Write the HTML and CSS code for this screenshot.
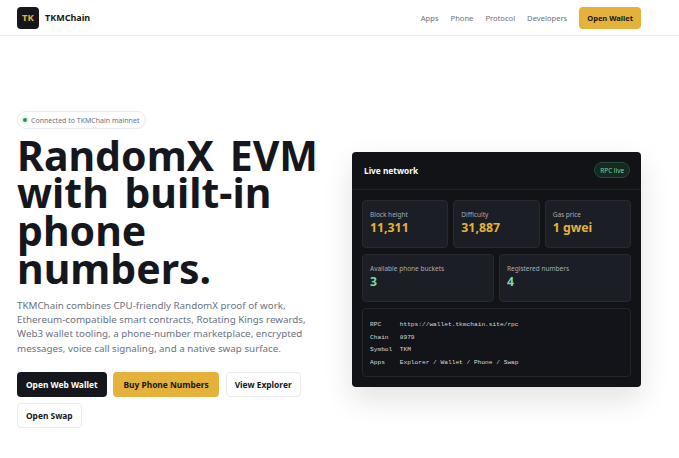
FILE: index.html
```html
<!DOCTYPE html>
<html lang="en">
<head>
    <meta charset="UTF-8">
    <meta name="viewport" content="width=device-width, initial-scale=1.0">
    <title>TKMChain</title>
    <link rel="stylesheet" href="styles.css">
</head>
<body>

<header class="topbar">
    <a class="brand" href="#">
        <span class="brand-mark">TK</span>
        <span class="brand-name">TKMChain</span>
    </a>
    <nav class="nav">
        <a href="#">Apps</a>
        <a href="#">Phone</a>
        <a href="#">Protocol</a>
        <a href="#">Developers</a>
        <a class="btn btn-gold btn-small" href="#">Open Wallet</a>
    </nav>
</header>

<main class="hero">
    <section class="intro">
        <div class="status-pill"><span class="status-dot"></span>Connected to TKMChain mainnet</div>
        <h1>RandomX EVM with built-in phone numbers.</h1>
        <p class="lead">TKMChain combines CPU-friendly RandomX proof of work, Ethereum-compatible smart contracts, Rotating Kings rewards, Web3 wallet tooling, a phone-number marketplace, encrypted messages, voice call signaling, and a native swap surface.</p>
        <div class="actions">
            <a class="btn btn-dark" href="#">Open Web Wallet</a>
            <a class="btn btn-gold" href="#">Buy Phone Numbers</a>
            <a class="btn btn-light" href="#">View Explorer</a>
            <a class="btn btn-light" href="#">Open Swap</a>
        </div>
    </section>

    <aside class="panel">
        <div class="panel-head">
            <h2>Live network</h2>
            <span class="live-pill">RPC live</span>
        </div>
        <div class="panel-body">
            <div class="stats stats-three">
                <div class="stat"><span class="stat-label">Block height</span><strong class="stat-value">11,311</strong></div>
                <div class="stat"><span class="stat-label">Difficulty</span><strong class="stat-value">31,887</strong></div>
                <div class="stat"><span class="stat-label">Gas price</span><strong class="stat-value">1 gwei</strong></div>
            </div>
            <div class="stats stats-two">
                <div class="stat"><span class="stat-label">Available phone buckets</span><strong class="stat-value green">3</strong></div>
                <div class="stat"><span class="stat-label">Registered numbers</span><strong class="stat-value green">4</strong></div>
            </div>
            <pre class="code">RPC     https://wallet.tkmchain.site/rpc
Chain   8979
Symbol  TKM
Apps    Explorer / Wallet / Phone / Swap</pre>
        </div>
    </aside>
</main>

</body>
</html>
```

FILE: styles.css
```css
* {
    box-sizing: border-box;
}
body {
    font-family: "Noto Sans", "Open Sans", sans-serif;
    margin: 0;
    background: #fff;
    color: #15171c;
}
a {
    text-decoration: none;
    color: inherit;
}
.topbar {
    height: 36px;
    padding: 0 38px 0 17px;
    display: flex;
    justify-content: space-between;
    align-items: center;
    border-bottom: 1px solid #e8eaed;
}
.brand {
    display: flex;
    align-items: center;
    gap: 6px;
}
.brand-mark {
    width: 22px;
    height: 22px;
    border-radius: 4px;
    background: #15171c;
    color: #e4b23a;
    font-size: 9.5px;
    font-weight: 700;
    display: flex;
    justify-content: center;
    align-items: center;
}
.brand-name {
    font-size: 9px;
    font-weight: 700;
}
.nav {
    display: flex;
    align-items: center;
    gap: 12px;
    font-size: 7.6px;
    color: #6b7280;
}
.btn {
    display: inline-flex;
    align-items: center;
    justify-content: center;
    height: 25px;
    padding: 0 8px;
    border-radius: 4px;
    font-size: 8.4px;
    font-weight: 700;
    color: #15171c;
    border: 1px solid transparent;
}
.btn-gold {
    background: #e4b23a;
    padding: 0 9.5px;
}
.btn-small {
    height: 22px;
    padding: 0 7px;
    font-size: 7.5px;
}
.btn-dark {
    background: #15171c;
    color: #fff;
}
.btn-light {
    background: #fff;
    border-color: #e8eaed;
}
.hero {
    padding: 75px 38px 0 17px;
    display: grid;
    grid-template-columns: 306px 289px;
    justify-content: space-between;
    align-items: center;
}
.status-pill {
    display: flex;
    width: fit-content;
    align-items: center;
    gap: 4px;
    height: 18px;
    padding: 0 6px 0 5px;
    border: 1px solid #e8eaed;
    border-radius: 9px;
    font-size: 7px;
    color: #6b7280;
}
.status-dot {
    width: 4px;
    height: 4px;
    border-radius: 50%;
    background: #2f8f5f;
    box-shadow: 0 0 0 2px #e3f3ea;
}
h1 {
    margin: 7.6px 0 0;
    font-size: 41px;
    line-height: 37.8px;
    font-weight: 700;
    word-spacing: 5px;
}
.lead {
    margin: 11px 0 0;
    max-width: 303px;
    font-size: 9.8px;
    line-height: 14.3px;
    color: #6b7280;
}
.actions {
    margin-top: 16px;
    display: flex;
    flex-wrap: wrap;
    gap: 6px 6.5px;
}
.panel {
    background: #111317;
    border-radius: 4px;
    box-shadow: 0 12px 30px rgba(0, 0, 0, 0.12);
    color: #fff;
}
.panel-head {
    height: 38px;
    padding: 0 11px 0 12px;
    display: flex;
    justify-content: space-between;
    align-items: center;
    border-bottom: 1px solid #1d2026;
}
.panel-head h2 {
    margin: 0;
    font-size: 8.3px;
    font-weight: 700;
}
.live-pill {
    height: 16px;
    padding: 0 5px;
    border-radius: 8px;
    border: 1px solid #254a3c;
    background: #14291f;
    color: #7fd6a8;
    font-size: 6.4px;
    display: flex;
    align-items: center;
}
.panel-body {
    padding: 10px;
    display: flex;
    flex-direction: column;
    gap: 6px;
}
.stats {
    display: grid;
    gap: 5px;
}
.stats-three {
    grid-template-columns: repeat(3, 1fr);
}
.stats-two {
    grid-template-columns: repeat(2, 1fr);
}
.stat {
    height: 48px;
    padding: 9px 7px;
    background: #1b1e24;
    border: 1px solid #272a31;
    border-radius: 4px;
    display: flex;
    flex-direction: column;
}
.stat-label {
    font-size: 6.5px;
    line-height: 10px;
    color: #a6abb5;
}
.stat-value {
    font-size: 12.3px;
    line-height: 16px;
    font-weight: 700;
    color: #e4b23a;
}
.stat-value.green {
    color: #7fd6a8;
}
.code {
    margin: 0;
    height: 69px;
    padding: 10px 7px;
    background: #121419;
    border: 1px solid #23262c;
    border-radius: 4px;
    font-family: "Liberation Mono", monospace;
    font-size: 6.2px;
    line-height: 12.7px;
    color: #d5d8de;
}
```
